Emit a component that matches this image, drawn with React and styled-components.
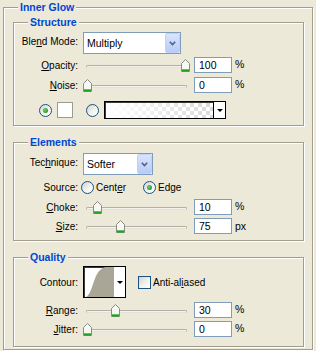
import React from 'react';
import styled, { createGlobalStyle } from 'styled-components';

const GlobalStyle = createGlobalStyle`
  html, body { margin: 0; padding: 0; background: #ece9d8; }
  body { font-family: "Liberation Sans", Arial, sans-serif; font-size: 10px; color: #000; }
  * { box-sizing: border-box; }
`;

const Page = styled.div`
  width: 316px;
  height: 351px;
  overflow: hidden;
  padding: 7px 0 0 3px;
`;

const Group = styled.section`
  position: relative;
  width: ${p => p.$w}px;
  margin-top: ${p => p.$mt || 0}px;
  padding: ${p => p.$pad};
  border: 1px solid #a19e90;
  box-shadow: inset 1px 1px 0 #fff, 1px 1px 0 #fff;
`;

const Caption = styled.h2`
  position: absolute;
  top: -7px;
  left: 14px;
  margin: 0;
  padding: 0 2px;
  background: #ece9d8;
  color: #0046d5;
  font-size: 10.5px;
  font-weight: bold;
  line-height: 13px;
  white-space: nowrap;
`;

const Row = styled.div`
  display: flex;
  align-items: center;
  height: ${p => p.$h}px;
  margin-top: ${p => p.$mt}px;
  padding-left: ${p => p.$pl || 0}px;
`;

const FieldLabel = styled.span`
  flex: none;
  width: 64px;
  text-align: right;
  white-space: nowrap;
  margin-right: ${p => (p.$gap ?? 5)}px;
  padding-bottom: ${p => p.$dy || 0}px;
`;

const Select = styled.div`
  flex: none;
  display: flex;
  align-items: stretch;
  width: ${p => p.$w}px;
  height: 22px;
  border: 1px solid #7f9db9;
  background: #fff;
  padding: 0 0 0 3px;
`;

const SelectText = styled.span`
  flex: 1;
  display: flex;
  align-items: center;
  font-size: 10.5px;
`;

const SelectButton = styled.span`
  flex: none;
  width: 15px;
  border: 1px solid #c0d1f8;
  border-radius: 2px;
  background: linear-gradient(#d9e4fd, #b8cbf8);
  display: flex;
  align-items: center;
  justify-content: center;
`;

const SliderWrap = styled.div`
  position: relative;
  flex: none;
  width: 109px;
  height: 16px;
  margin-right: 2px;
`;

const Track = styled.div`
  width: 101px;
  height: 3px;
  margin: 8px 0 0 3px;
  border: 1px solid #b3b1a3;
  border-bottom-color: #e4e2d8;
  border-radius: 2px;
  background: #f4f3ee;
`;

const Thumb = styled.svg`
  position: absolute;
  top: 2px;
  left: ${p => p.$pos}px;
`;

const NumberBox = styled.div`
  flex: none;
  width: 38px;
  height: 16px;
  border: 1px solid #7f9db9;
  background: #fff;
  padding-left: 4px;
  display: flex;
  align-items: center;
  font-size: 10.5px;
`;

const Unit = styled.span`
  margin-left: 3px;
  padding-bottom: ${p => p.$dy || 0}px;
  font-size: 10.5px;
`;

const Radio = styled.span`
  flex: none;
  width: 13px;
  height: 13px;
  border-radius: 50%;
  border: 1px solid #1c5180;
  background: linear-gradient(135deg, #d4d4ce 0%, #f2f2ee 55%, #ffffff 100%);
  margin-left: ${p => p.$ml || 0}px;
  display: flex;
  align-items: center;
  justify-content: center;
  &::after {
    content: '';
    display: ${p => (p.$on ? 'block' : 'none')};
    width: 5px;
    height: 5px;
    border-radius: 50%;
    background: radial-gradient(circle at 40% 40%, #6fd06f, #21a121 70%);
  }
`;

const RadioOption = styled.span`
  flex: none;
  display: flex;
  align-items: center;
  gap: 2px;
  width: ${p => (p.$w ? `${p.$w}px` : 'auto')};
`;

const Swatch = styled.span`
  flex: none;
  width: 16px;
  height: 16px;
  margin-left: 5px;
  background: #fff;
  border: 1px solid #9d9b8f;
`;

const GradientBox = styled.div`
  flex: none;
  display: flex;
  width: 122px;
  height: 18px;
  margin-left: 5px;
  border: 1px solid #000;
  box-shadow: inset 1px 1px 0 #3a3a3a;
  background: #fff;
`;

const GradientFill = styled.span`
  flex: 1;
  margin: 1px 0 0 1px;
  background-image: linear-gradient(to right, #fff 0%, rgba(255, 255, 255, 0) 100%),
    repeating-conic-gradient(#d9d9d9 0 25%, #ffffff 0 50%);
  background-size: 100% 100%, 8px 8px;
`;

const DropArrow = styled.span`
  flex: none;
  width: ${p => p.$w}px;
  border-left: ${p => (p.$line ? '1px solid #000' : 'none')};
  background: #fff;
  display: flex;
  align-items: center;
  justify-content: center;
  &::after {
    content: '';
    width: 0;
    height: 0;
    border-left: 3px solid transparent;
    border-right: 3px solid transparent;
    border-top: 3px solid #000;
  }
`;

const ContourBox = styled.div`
  flex: none;
  display: flex;
  width: 43px;
  height: 32px;
  border: 1px solid #000;
  box-shadow: inset 1px 1px 0 #3a3a3a;
  background: #fff;
`;

const CurveArea = styled.svg`
  flex: none;
  display: block;
`;

const CheckBox = styled.span`
  flex: none;
  width: 13px;
  height: 13px;
  margin-left: 12px;
  border: 1px solid #1c5180;
  background: linear-gradient(135deg, #d4d4ce 0%, #f2f2ee 55%, #ffffff 100%);
`;

const CheckLabel = styled.span`
  margin-left: 2px;
`;

const Chevron = () => (
  <svg width="7" height="5" viewBox="0 0 7 5">
    <path d="M0.8 0.8 L3.5 3.6 L6.2 0.8" stroke="#4d6185" strokeWidth="1.6" fill="none" />
  </svg>
);

const SliderThumb = ({ pos }) => (
  <Thumb $pos={pos} width="9" height="13" viewBox="0 0 9 13">
    <path d="M0.5 12.5 V4.5 L4.5 0.5 L8.5 4.5 V12.5 Z" fill="#f7f7f4" stroke="#8a8a84" />
    <rect x="1" y="10" width="7" height="1" fill="#5cc45c" />
    <rect x="1" y="11" width="7" height="1.5" fill="#21a121" />
  </Thumb>
);

const SliderRow = ({ label, pos, value, unit, mt, unitDy }) => (
  <Row $h={16} $mt={mt}>
    <FieldLabel>{label}</FieldLabel>
    <SliderWrap>
      <Track />
      <SliderThumb pos={pos} />
    </SliderWrap>
    <NumberBox>{value}</NumberBox>
    <Unit $dy={unitDy}>{unit}</Unit>
  </Row>
);

export default function App() {
  return (
    <>
      <GlobalStyle />
      <Page>
        <Group $w={310} $pad="14px 8px 2px 9px">
          <Caption>Inner Glow</Caption>

          <Group $w={291} $pad="0 0 6px 0">
            <Caption>Structure</Caption>
            <Row $h={22} $mt={9}>
              <FieldLabel $dy={3}>Ble<u>n</u>d Mode:</FieldLabel>
              <Select $w={98}>
                <SelectText>Multiply</SelectText>
                <SelectButton><Chevron /></SelectButton>
              </Select>
            </Row>
            <SliderRow label={<><u>O</u>pacity:</>} pos={98} value="100" unit="%" mt={3} unitDy={3} />
            <SliderRow label={<><u>N</u>oise:</>} pos={0} value="0" unit="%" mt={4} unitDy={3} />
            <Row $h={18} $mt={8} $pl={25}>
              <Radio $on />
              <Swatch />
              <Radio $ml={13} />
              <GradientBox>
                <GradientFill />
                <DropArrow $w={12} $line />
              </GradientBox>
            </Row>
          </Group>

          <Group $w={291} $mt={16} $pad="0 0 6px 0">
            <Caption>Elements</Caption>
            <Row $h={22} $mt={10}>
              <FieldLabel $dy={3}>Tec<u>h</u>nique:</FieldLabel>
              <Select $w={70}>
                <SelectText>Softer</SelectText>
                <SelectButton><Chevron /></SelectButton>
              </Select>
            </Row>
            <Row $h={13} $mt={6}>
              <FieldLabel $gap={3}>Source:</FieldLabel>
              <RadioOption $w={62}>
                <Radio />
                <span>Cent<u>e</u>r</span>
              </RadioOption>
              <RadioOption>
                <Radio $on />
                <span>Ed<u>g</u>e</span>
              </RadioOption>
            </Row>
            <SliderRow label={<><u>C</u>hoke:</>} pos={10} value="10" unit="%" mt={5} unitDy={3} />
            <SliderRow label={<><u>S</u>ize:</>} pos={33} value="75" unit="px" mt={3} />
          </Group>

          <Group $w={291} $mt={16} $pad="0 0 9px 0">
            <Caption>Quality</Caption>
            <Row $h={32} $mt={8}>
              <FieldLabel>Contour:</FieldLabel>
              <ContourBox>
                <CurveArea width="30" height="30" viewBox="0 0 30 30">
                  <path d="M1.5 30 C 7 29, 9 14, 13 7 C 15 3.5, 18 0.5, 22 0 L 30 0 L 30 30 Z" fill="#aaa697" />
                </CurveArea>
                <DropArrow $w={11} />
              </ContourBox>
              <CheckBox />
              <CheckLabel>Anti-al<u>i</u>ased</CheckLabel>
            </Row>
            <SliderRow label={<><u>R</u>ange:</>} pos={28} value="30" unit="%" mt={4} unitDy={3} />
            <SliderRow label={<><u>J</u>itter:</>} pos={0} value="0" unit="%" mt={3} unitDy={3} />
          </Group>
        </Group>
      </Page>
    </>
  );
}
